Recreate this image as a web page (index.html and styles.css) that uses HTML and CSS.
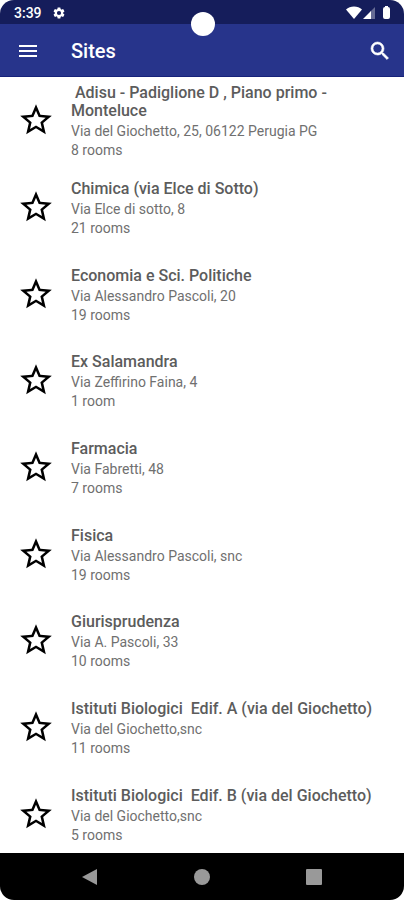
FILE: index.html
```
<!DOCTYPE html>
<html lang="en">
<head>
<meta charset="utf-8">
<meta name="viewport" content="width=device-width, initial-scale=1">
<title>Sites</title>
<link rel="stylesheet" href="styles.css">
</head>
<body>
<svg class="defs" aria-hidden="true">
  <symbol id="star" viewBox="0 0 24 24"><path d="M22 9.24l-7.19-.62L12 2 9.19 8.63 2 9.24l5.46 4.73L5.82 21 12 17.27 18.18 21l-1.63-7.03L22 9.24zM12 15.4l-3.76 2.27 1-4.28-3.32-2.88 4.38-.38L12 6.1l1.71 4.04 4.38.38-3.32 2.88 1 4.28L12 15.4z"/></symbol>
</svg>
<div class="screen">
  <div class="status">
    <span>3:39</span>
    <svg class="gear" viewBox="0 0 24 24"><path d="M19.14 12.94c.04-.3.06-.61.06-.94 0-.32-.02-.64-.07-.94l2.03-1.58a.49.49 0 0 0 .12-.61l-1.92-3.32a.49.49 0 0 0-.59-.22l-2.39.96c-.5-.38-1.03-.7-1.62-.94l-.36-2.54a.48.48 0 0 0-.48-.41h-3.84c-.24 0-.43.17-.47.41l-.36 2.54c-.59.24-1.13.57-1.62.94l-2.39-.96a.48.48 0 0 0-.59.22L2.74 8.87a.48.48 0 0 0 .12.61l2.03 1.58c-.05.3-.09.63-.09.94s.02.64.07.94l-2.03 1.58a.49.49 0 0 0-.12.61l1.92 3.32c.12.22.37.29.59.22l2.39-.96c.5.38 1.03.7 1.62.94l.36 2.54c.05.24.24.41.48.41h3.84c.24 0 .44-.17.47-.41l.36-2.54c.59-.24 1.13-.56 1.62-.94l2.39.96c.22.08.47 0 .59-.22l1.92-3.32a.48.48 0 0 0-.12-.61l-2.01-1.58zM12 15.6A3.6 3.6 0 1 1 12 8.4a3.6 3.6 0 0 1 0 7.2z"/></svg>
    <span class="camera"></span>
    <svg class="signals" viewBox="0 0 46 14"><path d="M0 3.5C2 1.5 5 .5 8 .5s6 1 8 3L8 13z"/><path d="M29 1v12h-5V6z" opacity=".35"/><path d="M17 13l8-8v8z"/><path d="M39 0h3v1q2 0 2 2v8q0 2-2 2h-3q-2 0-2-2V3q0-2 2-2z"/></svg>
  </div>
  <header class="appbar">
    <button aria-label="Menu"><svg viewBox="0 0 24 24"><path d="M3 18h18v-2H3v2zm0-5h18v-2H3v2zm0-7v2h18V6H3z"/></svg></button>
    <h1>Sites</h1>
    <button aria-label="Search"><svg viewBox="0 0 24 24"><path stroke="currentColor" stroke-width=".6" d="M15.5 14h-.79l-.28-.27A6.47 6.47 0 0 0 16 9.5 6.5 6.5 0 1 0 9.5 16c1.61 0 3.09-.59 4.23-1.57l.27.28v.79l5 4.99L20.49 19l-4.99-5zm-6 0C7.01 14 5 11.99 5 9.5S7.01 5 9.5 5 14 7.01 14 9.5 11.99 14 9.5 14z"/></svg></button>
  </header>
  <main>
    <ul class="sites">
      <li><button aria-label="Favourite"><svg><use href="#star"/></svg></button><div><h2> &nbsp;Adisu - Padiglione D , Piano primo - Monteluce</h2><p>Via del Giochetto, 25, 06122 Perugia PG</p><p>8 rooms</p></div></li>
      <li><button aria-label="Favourite"><svg><use href="#star"/></svg></button><div><h2>Chimica (via Elce di Sotto)</h2><p>Via Elce di sotto, 8</p><p>21 rooms</p></div></li>
      <li><button aria-label="Favourite"><svg><use href="#star"/></svg></button><div><h2>Economia e Sci. Politiche</h2><p>Via Alessandro Pascoli, 20</p><p>19 rooms</p></div></li>
      <li><button aria-label="Favourite"><svg><use href="#star"/></svg></button><div><h2>Ex Salamandra</h2><p>Via Zeffirino Faina, 4</p><p>1 room</p></div></li>
      <li><button aria-label="Favourite"><svg><use href="#star"/></svg></button><div><h2>Farmacia</h2><p>Via Fabretti, 48</p><p>7 rooms</p></div></li>
      <li><button aria-label="Favourite"><svg><use href="#star"/></svg></button><div><h2>Fisica</h2><p>Via Alessandro Pascoli, snc</p><p>19 rooms</p></div></li>
      <li><button aria-label="Favourite"><svg><use href="#star"/></svg></button><div><h2>Giurisprudenza</h2><p>Via A. Pascoli, 33</p><p>10 rooms</p></div></li>
      <li><button aria-label="Favourite"><svg><use href="#star"/></svg></button><div><h2>Istituti Biologici&nbsp; Edif. A (via del Giochetto)</h2><p>Via del Giochetto,snc</p><p>11 rooms</p></div></li>
      <li><button aria-label="Favourite"><svg><use href="#star"/></svg></button><div><h2>Istituti Biologici&nbsp; Edif. B (via del Giochetto)</h2><p>Via del Giochetto,snc</p><p>5 rooms</p></div></li>
    </ul>
  </main>
  <nav class="navbar">
    <button aria-label="Back"><svg viewBox="0 0 16 16"><path d="M15 0v16L0 8z"/></svg></button>
    <button aria-label="Home"><svg viewBox="0 0 16 16"><circle cx="8" cy="8" r="8"/></svg></button>
    <button aria-label="Recent apps"><svg viewBox="0 0 16 16"><rect width="16" height="16" rx="1"/></svg></button>
  </nav>
</div>
</body>
</html>
```
FILE: styles.css
```
* {
  box-sizing: border-box;
  margin: 0;
  padding: 0;
}

body {
  background: #fff;
  font-family: Roboto, sans-serif;
}

button {
  display: grid;
  place-items: center;
  border: 0;
  background: none;
  color: inherit;
}

svg {
  display: block;
  fill: currentColor;
}

.defs {
  position: absolute;
  width: 0;
  height: 0;
}

.screen {
  display: flex;
  flex-direction: column;
  height: 100vh;
  border-radius: 14px;
  overflow: hidden;
}

.status {
  position: relative;
  display: flex;
  align-items: center;
  gap: 10px;
  height: 24px;
  padding: 1px 12px 0 14px;
  background: #151d5b;
  color: #fff;
  font-size: 14px;
  font-weight: 500;
}

.gear {
  width: 14px;
  height: 14px;
}

.signals {
  width: 46px;
  height: 14px;
  margin-left: auto;
}

.camera {
  position: absolute;
  top: 12px;
  left: 50%;
  width: 24px;
  height: 24px;
  margin-left: -11px;
  border-radius: 50%;
  background: #fff;
}

.appbar {
  display: flex;
  align-items: center;
  height: 53px;
  padding: 2px 12px 0 16px;
  border-bottom: 1px solid #16227a;
  background: #27348b;
  color: #fff;
}

.appbar svg {
  width: 24px;
  height: 24px;
}

.appbar h1 {
  flex: 1;
  margin-left: 31px;
  font-size: 20px;
  font-weight: 500;
  line-height: 24px;
}

main {
  flex: 1;
  display: flex;
  min-height: 0;
}

.sites {
  flex: 1;
  display: grid;
  grid-auto-rows: 1fr;
  margin-bottom: -4px;
  list-style: none;
}

.sites li {
  display: grid;
  grid-template-columns: 71px 1fr;
  align-items: center;
  padding-right: 24px;
}

.sites li > div {
  padding-top: 4px;
}

.sites button {
  color: #000;
}

.sites svg {
  width: 38px;
  height: 38px;
}

.sites h2 {
  margin-bottom: 2px;
  color: #5c5c5c;
  font-size: 16px;
  font-weight: 500;
  line-height: 18px;
}

.sites p {
  color: #707070;
  font-size: 14px;
  line-height: 19px;
}

.navbar {
  display: flex;
  justify-content: center;
  gap: 96px;
  height: 47px;
  background: #000;
  color: #999;
}

.navbar svg {
  width: 16px;
  height: 16px;
}
```
